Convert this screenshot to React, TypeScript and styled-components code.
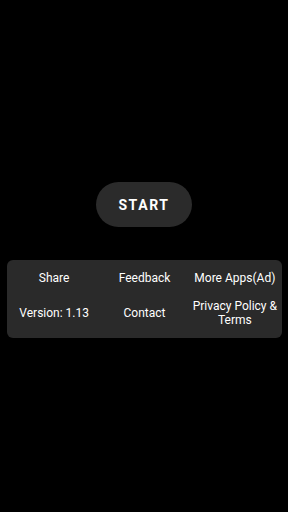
import React from "react";
import styled, { createGlobalStyle } from "styled-components";

type MenuItem = {
  label: string;
};

const items: MenuItem[] = [
  { label: "Share" },
  { label: "Feedback" },
  { label: "More Apps(Ad)" },
  { label: "Version: 1.13" },
  { label: "Contact" },
  { label: "Privacy Policy & Terms" }
];

const App: React.FC = () => {
  return (
    <>
      <GlobalStyle />
      <Screen>
        <StartButton>START</StartButton>
        <MenuPanel>
          {items.map(item => (
            <MenuCell key={item.label}>{item.label}</MenuCell>
          ))}
        </MenuPanel>
      </Screen>
    </>
  );
};

const GlobalStyle = createGlobalStyle`
  html, body {
    margin: 0;
    padding: 0;
    background: #000;
  }
  body {
    font-family: Roboto, "Liberation Sans", sans-serif;
  }
`;

const Screen = styled.div`
  width: 288px;
  height: 512px;
  background: #000;
  display: flex;
  flex-direction: column;
  align-items: center;
  padding-top: 182px;
  box-sizing: border-box;
`;

const StartButton = styled.button`
  width: 96px;
  height: 45px;
  border: none;
  border-radius: 23px;
  background: #2b2b2b;
  color: #fff;
  font-family: Roboto, "Liberation Sans", sans-serif;
  font-weight: 700;
  font-size: 14px;
  letter-spacing: 1.6px;
  padding: 0;
  cursor: pointer;
`;

const MenuPanel = styled.div`
  margin-top: 33px;
  margin-left: 1px;
  width: 275px;
  box-sizing: border-box;
  background: #2a2a2a;
  border-radius: 6px;
  display: grid;
  grid-template-columns: 1fr 1fr 1fr;
  grid-template-rows: 18px 28px;
  row-gap: 12px;
  padding: 9px 2px 11px;
  align-items: center;
`;

const MenuCell = styled.div`
  color: #fff;
  font-size: 12px;
  line-height: 14px;
  text-align: center;
`;

export default App;
